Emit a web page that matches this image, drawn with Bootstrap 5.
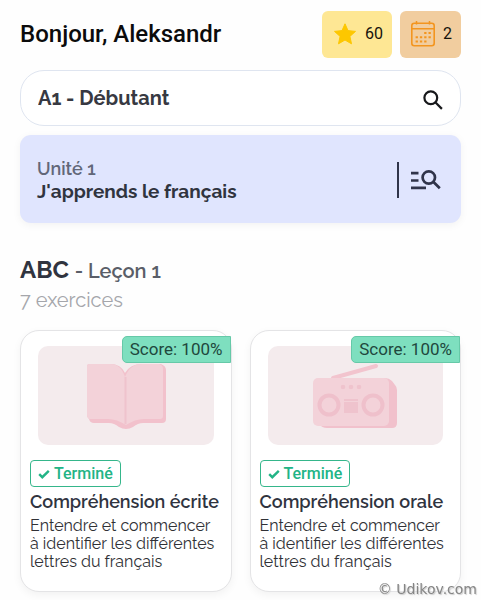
<!DOCTYPE html>
<html lang="fr">
<head>
<meta charset="utf-8">
<meta name="viewport" content="width=device-width, initial-scale=1">
<title>Leçon 1</title>
<link href="https://cdn.jsdelivr.net/npm/bootstrap@5.3.0/dist/css/bootstrap.min.css" rel="stylesheet">
<style>
body { font-family: Raleway, Lato, sans-serif; color: #30343f; background: #fefefe; }
.page { padding: 10px 20px 8px; }
.hello, .stat, .score, .state { font-family: Roboto, sans-serif; }
.hello { font-size: 24px; line-height: 48px; font-weight: 500; color: #0b0b0c; }
.stat { height: 47px; padding: 0 9px 0 11px; border: 0; border-radius: 6px; font-size: 16px; color: #17130c; }
.stat-stars { background: #fee794; }
.stat-days { background: #f1cd9f; }
.level { height: 56px; margin-top: 12px; padding: 0 16px 0 17px; border: 1px solid #dfe5f0; border-radius: 24px; background: #fff; }
.level input { font-size: 20px; font-weight: 700; color: #373942; min-width: 0; }
.unit { margin-top: 9px; padding: 23px 20px 21px 17px; border-radius: 11px; background: #e0e5fe; box-shadow: 0 2px 8px #0000000d; }
.unit-no { font-size: 18px; line-height: 22px; font-weight: 600; color: #626779; }
.unit-name { font-size: 19px; line-height: 22px; font-weight: 700; }
.unit-search { border-left: 2px solid #30344a; height: 36px; padding-left: 12px; }
.lesson { margin-top: 32px; font-size: 24px; line-height: 30px; font-weight: 700; }
.lesson-no { font-size: 20px; font-weight: 600; color: #5a5e68; }
.count { margin-top: 2px; font-size: 20px; line-height: 24px; color: #a5a6ab; }
.exercises { --bs-gutter-x: 18px; margin-top: 18px; }
.exercise { padding: 15px 9px 20px; border: 1px solid #e4e4e6; border-radius: 19px; background: #fff; box-shadow: 0 3px 8px #0000000d; }
.art { margin: 0 8px 15px; height: 99px; border-radius: 10px; background: #f4ebed; }
.score { top: 5px; right: 0; height: 27px; padding: 0 7px; border: 1px solid #66c9a8; border-radius: 5px 0 0 5px; background: #7edfbf; color: #21483d; font-size: 17px; line-height: 25px; }
.state { height: 27px; padding: 0 7px; border: 1px solid #35b68b; border-radius: 4px; font-size: 16px; font-weight: 500; color: #22b486; }
.exercise-name { margin-top: 3px; font-size: 18px; line-height: 24px; font-weight: 600; white-space: nowrap; }
.about { margin-top: 3px; font-size: 16px; line-height: 18px; color: #303136; }
.credit { right: 4px; bottom: 2px; font: 14px/18px "DejaVu Sans", sans-serif; color: #858585; text-shadow: 1px 1px 1px #ccc; }
</style>
</head>
<body>
<main class="page">
  <header class="d-flex justify-content-between align-items-center">
    <h1 class="hello m-0">Bonjour, Aleksandr</h1>
    <div class="d-flex gap-2">
      <button type="button" class="stat stat-stars d-flex align-items-center gap-2">
        <svg width="24" height="24" viewBox="0 0 24 24" aria-hidden="true"><path d="M12 1.8l3 6.8 7.5.8-5.6 5 1.6 7.4-6.5-3.8-6.5 3.8 1.6-7.4-5.6-5 7.5-.8z" fill="#fdc700" stroke="#fdc700" stroke-linejoin="round"/></svg>
        <span>60</span>
      </button>
      <button type="button" class="stat stat-days d-flex align-items-center gap-2">
        <svg width="24" height="26" viewBox="0 0 24 26" fill="none" stroke="#f3951f" aria-hidden="true"><rect x=".8" y="2.3" width="22.4" height="22.4" rx="2.5" stroke-width="1.6"/><path d="M1 7.8h22M5.5 0v3.5M18.5 0v3.5" stroke-width="1.5"/><path d="M13.2 12h7M4.6 16.2h16M4.6 20.4h11" stroke-width="2" stroke-dasharray="2.3 2"/></svg>
        <span>2</span>
      </button>
    </div>
  </header>

  <form class="level d-flex align-items-center">
    <input type="text" class="form-control-plaintext flex-grow-1 p-0" value="A1 - Débutant" aria-label="Niveau">
    <button type="button" class="btn p-0 border-0 d-flex mt-1" aria-label="Rechercher">
      <svg width="22" height="22" viewBox="0 0 22 22" fill="none" stroke="#17181b" stroke-width="2.2" aria-hidden="true"><circle cx="8.8" cy="8.8" r="6.4"/><path d="M13.3 13.3l6.6 6.6"/></svg>
    </button>
  </form>

  <section class="unit d-flex justify-content-between align-items-center">
    <div>
      <div class="unit-no">Unité 1</div>
      <h2 class="unit-name m-0">J'apprends le français</h2>
    </div>
    <div class="unit-search d-flex align-items-center">
      <button type="button" class="btn p-0 border-0 d-flex" aria-label="Parcourir les unités">
        <svg width="30" height="22" viewBox="0 0 30 22" fill="none" stroke="#30344a" stroke-width="2.7" aria-hidden="true"><path d="M0 4.2h7.5M0 11.5h7.5M0 18.8h15M22 12.5l6.8 6.8"/><circle cx="17.8" cy="8.5" r="6.2"/></svg>
      </button>
    </div>
  </section>

  <h2 class="lesson mb-0">ABC <span class="lesson-no">- Leçon 1</span></h2>
  <p class="count mb-0">7 exercices</p>

  <div class="exercises row">
    <div class="col-6">
      <article class="exercise position-relative h-100">
        <div class="art d-flex justify-content-center align-items-center">
          <svg width="80" height="66" viewBox="0 0 80 66" aria-hidden="true"><path d="M1 3Q1 1 4 1h20q11 0 15 9Q44 1 56 1h19q5 2 5 6v49q0 4-4 4H57q-5 0-10 4-7 4-14 0-5-4-10-4H8q-4 0-5-4l-2-3z" fill="#f2c1cc"/><path d="M1 3Q1 1 4 1h20q11 0 15 13Q44 1 56 1h17q4 1 4 5v47q0 3-3 3H58q-9 0-18 6-9-6-18-6H4q-3 0-3-4z" fill="#f3d2d9"/><path d="M39.5 14v47" stroke="#efc3cd" stroke-width="2"/></svg>
        </div>
        <span class="score position-absolute">Score: 100%</span>
        <div class="state d-inline-flex align-items-center gap-1">
          <svg width="12" height="10" viewBox="0 0 12 10" aria-hidden="true"><path d="M1.2 5.2l3.1 3L10.8 1.8" fill="none" stroke="#22b486" stroke-width="2.4"/></svg>
          <span>Terminé</span>
        </div>
        <h3 class="exercise-name mb-0">Compréhension écrite</h3>
        <p class="about mb-0">Entendre et commencer<br>à identifier les différentes<br>lettres du français</p>
      </article>
    </div>
    <div class="col-6">
      <article class="exercise position-relative h-100">
        <div class="art d-flex justify-content-center align-items-center">
          <svg width="84" height="66" viewBox="0 0 84 66" aria-hidden="true"><path d="M20 15L63 3" stroke="#f2c4ce" stroke-width="4" stroke-linecap="round"/><path d="M6 15h66q4 0 7 3l3 4q2 2 2 5v33q0 5-5 5H14q-5 0-8-4z" fill="#f1c1cc"/><rect x="0" y="15" width="76" height="48" rx="5" fill="#f3d2d9"/><g fill="none" stroke="#efc0cb" stroke-width="4"><circle cx="16" cy="42" r="9.5"/><circle cx="60" cy="42" r="9.5"/></g><g fill="#efc3cd"><circle cx="30" cy="24" r="2.3"/><circle cx="38" cy="24" r="2.3"/><circle cx="46" cy="24" r="2.3"/><path d="M31 36h14v2H31zM31 39h14v11H31z"/></g></svg>
        </div>
        <span class="score position-absolute">Score: 100%</span>
        <div class="state d-inline-flex align-items-center gap-1">
          <svg width="12" height="10" viewBox="0 0 12 10" aria-hidden="true"><path d="M1.2 5.2l3.1 3L10.8 1.8" fill="none" stroke="#22b486" stroke-width="2.4"/></svg>
          <span>Terminé</span>
        </div>
        <h3 class="exercise-name mb-0">Compréhension orale</h3>
        <p class="about mb-0">Entendre et commencer<br>à identifier les différentes<br>lettres du français</p>
      </article>
    </div>
  </div>
</main>
<div class="credit position-fixed">© Udikov.com</div>
<script src="https://cdn.jsdelivr.net/npm/bootstrap@5.3.0/dist/js/bootstrap.bundle.min.js"></script>
</body>
</html>
